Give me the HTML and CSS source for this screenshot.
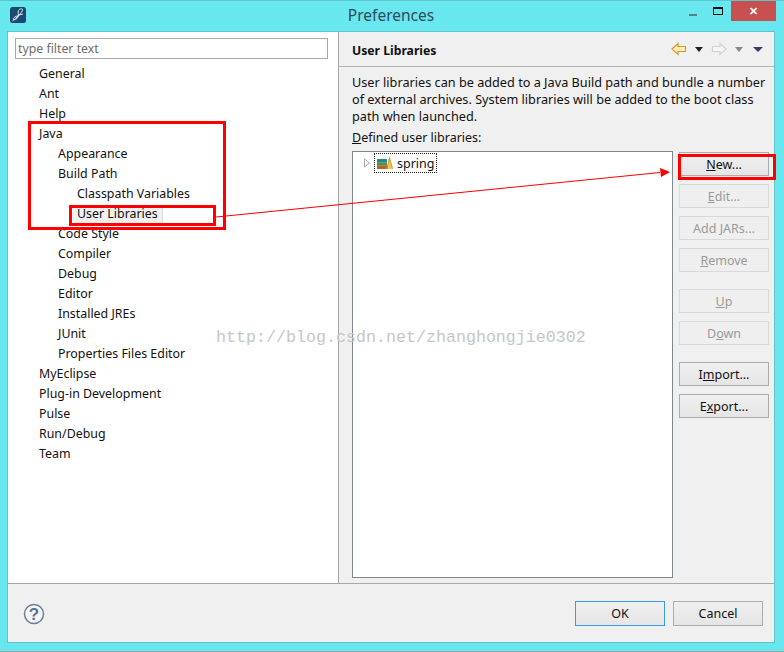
FILE: index.html
```html
<!DOCTYPE html>
<html lang="en">
<head>
<meta charset="utf-8">
<title>Preferences</title>
<link rel="stylesheet" href="styles.css">
</head>
<body>
<div class="window">
  <header class="titlebar">
    <svg class="app-icon" width="16" height="16" viewBox="0 0 16 16"><rect width="16" height="16" rx="2.5" fill="#1a4a74"/><path d="M2.500 14 C6 11.500 12 5.500 12.500 3 C12.800 1.200 9.500 1.300 8.500 3.500 C7.500 5.800 9 7.500 8 10 C7 12.500 3.500 13.500 3.200 12 C3 10.500 8 8 13 7" fill="none" stroke="#dfe9f0" stroke-width="1"/></svg>
    <h1 class="title">Preferences</h1>
    <div class="win-controls">
      <span class="win-min"></span>
      <span class="win-max"></span>
      <span class="win-close">✕</span>
    </div>
  </header>
  <div class="client">
    <div class="panes">
      <aside class="nav-pane">
        <input class="filter" type="text" placeholder="type filter text">
        <ul class="tree">
          <li class="l0">General</li>
          <li class="l0">Ant</li>
          <li class="l0">Help</li>
          <li class="l0">Java</li>
          <li class="l1">Appearance</li>
          <li class="l1">Build Path</li>
          <li class="l2">Classpath Variables</li>
          <li class="l2"><span class="selected">User Libraries</span></li>
          <li class="l1">Code Style</li>
          <li class="l1">Compiler</li>
          <li class="l1">Debug</li>
          <li class="l1">Editor</li>
          <li class="l1">Installed JREs</li>
          <li class="l1">JUnit</li>
          <li class="l1">Properties Files Editor</li>
          <li class="l0">MyEclipse</li>
          <li class="l0">Plug-in Development</li>
          <li class="l0">Pulse</li>
          <li class="l0">Run/Debug</li>
          <li class="l0">Team</li>
        </ul>
      </aside>
      <main class="page">
        <div class="page-head">
          <h2 class="page-title">User Libraries</h2>
          <div class="nav-tools">
            <svg width="16" height="14" viewBox="0 0 16 14"><path d="M1 7 L7 1.500 V4.500 H14.500 V9.500 H7 V12.500 Z" fill="#fdf0b8" stroke="#d9992a" stroke-width="1.200"/></svg>
            <span class="tri dark"></span>
            <svg width="16" height="14" viewBox="0 0 16 14"><path d="M15 7 L9 1.500 V4.500 H1.500 V9.500 H9 V12.500 Z" fill="#f6f6f6" stroke="#d0d0d0" stroke-width="1.200"/></svg>
            <span class="tri grey"></span>
            <span class="tri navy"></span>
          </div>
        </div>
        <div class="page-body">
          <p class="desc">User libraries can be added to a Java Build path and bundle a number of external archives. System libraries will be added to the boot class path when launched.</p>
          <label class="list-label"><u>D</u>efined user libraries:</label>
          <div class="list-row">
            <div class="list">
              <div class="lib-row">
                <svg class="twisty" width="8" height="10" viewBox="0 0 8 10"><path d="M1.500 1 L6.500 5 L1.500 9 Z" fill="#fff" stroke="#a5a5a5"/></svg>
                <span class="lib-focus">
                  <svg width="16" height="13" viewBox="0 0 16 13"><rect x="0" y="2" width="10" height="3.200" fill="#2f7f8c"/><rect x="0" y="5.200" width="10" height="3" fill="#3c9a57"/><rect x="0" y="8.200" width="11" height="3.800" fill="#b5642a"/><path d="M10 12 L12.500 0.500 L15.500 12" fill="#f2c94c" stroke="#c8952a"/></svg>
                  <span>spring</span>
                </span>
              </div>
            </div>
            <div class="btns">
              <button class="btn"><u>N</u>ew...</button>
              <button class="btn off"><u>E</u>dit...</button>
              <button class="btn off">Add <u>J</u>ARs...</button>
              <button class="btn off"><u>R</u>emove</button>
              <button class="btn off gap"><u>U</u>p</button>
              <button class="btn off">D<u>o</u>wn</button>
              <button class="btn gap">I<u>m</u>port...</button>
              <button class="btn">E<u>x</u>port...</button>
            </div>
          </div>
        </div>
      </main>
    </div>
    <footer class="footer">
      <svg width="22" height="22" viewBox="0 0 22 22"><circle cx="11" cy="11" r="9.500" fill="#f4f6f9" stroke="#6d7f9c" stroke-width="1.500"/><text x="11" y="17" text-anchor="middle" class="help-q">?</text></svg>
      <div class="footer-btns">
        <button class="btn wide default">OK</button>
        <button class="btn wide">Cancel</button>
      </div>
    </footer>
  </div>
  <div class="mark box-java"></div>
  <div class="mark box-lib"></div>
  <div class="mark box-new"></div>
  <svg class="arrow" width="784" height="652" viewBox="0 0 784 652"><path d="M216 217 L660 172.500" stroke="#f00" stroke-width="1" fill="none"/><path d="M660 168 L670 172 L661 177 Z" fill="#f00"/></svg>
  <div class="watermark">http://blog.csdn.net/zhanghongjie0302</div>
</div>
</body>
</html>
```
FILE: styles.css
```css
* { box-sizing: border-box; }
html, body { margin: 0; padding: 0; }
body { width: 784px; height: 652px; overflow: hidden; font-family: "Noto Sans", "Noto Sans CJK SC", sans-serif; font-size: 12.5px; color: #111; }
.window { position: relative; width: 784px; height: 652px; background: #69e7ee; padding: 0 9px 8px 7px; display: flex; flex-direction: column; border-top: 1px solid #5fc4cc; border-bottom: 1px solid #9aa8aa; }
.titlebar { height: 30px; flex: none; display: flex; align-items: center; position: relative; }
.app-icon { margin: -2px 0 0 3px; flex: none; }
.title { flex: 1; margin: 0; text-align: center; font-size: 15.500px; font-weight: 400; color: #2f4a5e; padding: 0 19px 2px 0; }
.win-controls { position: absolute; right: -1px; top: 0; display: flex; align-items: flex-start; }
.win-min { width: 8px; height: 2px; background: #5a8088; margin: 13px 16px 0 0; }
.win-max { width: 10px; height: 8px; border: 1px solid #111; border-top-width: 2px; margin: 6px 8px 0 0; }
.win-close { width: 45px; height: 20px; background: #c75050; color: #fff; text-align: center; line-height: 20px; font-size: 11px; font-weight: 700; }
.client { flex: 1; min-height: 0; display: flex; flex-direction: column; background: #f0f0f0; border: 1px solid #5fc4cc; }
.panes { flex: 1; min-height: 0; display: flex; border-bottom: 1px solid #a8a8a8; }
.nav-pane { width: 331px; flex: none; background: #fff; border-right: 1px solid #a8a8a8; padding: 6px 0 0 7px; }
.filter { display: block; width: 313px; height: 21px; border: 1px solid #a9a9a9; padding: 0 2px; font: inherit; font-size: 12.300px; background: #fff; outline: none; }
.filter::placeholder { color: #6d6d6d; opacity: 1; }
.tree { list-style: none; margin: 5px 0 0; padding: 0; font-size: 12.400px; }
.tree li { height: 20px; line-height: 20px; white-space: nowrap; }
.l0 { padding-left: 24px; }
.l1 { padding-left: 43px; }
.l2 { padding-left: 62px; }
.selected { display: inline-block; height: 19px; line-height: 18px; background: #f0f0f0; padding: 0 4px; margin-left: -4px; border-right: 1px solid #ddd; }
.page { flex: 1; min-width: 0; display: flex; flex-direction: column; }
.page-head { height: 35px; flex: none; display: flex; align-items: center; justify-content: space-between; border-bottom: 1px solid #b4b4b4; padding: 2px 11px 0 13px; }
.page-title { margin: 0; font-size: 12.200px; font-weight: 700; color: #111; }
.nav-tools { display: flex; align-items: center; gap: 8px; margin-top: -2px; }
.tri { width: 0; height: 0; border-left: 4px solid transparent; border-right: 4px solid transparent; border-top: 5px solid; }
.tri.dark { color: #222; }
.tri.grey { color: #888; }
.tri.navy { color: #3a3a6e; border-left-width: 5px; border-right-width: 5px; margin-left: 2px; }
.page-body { flex: 1; min-height: 0; display: flex; flex-direction: column; padding: 7px 6px 5px 13px; }
.desc { margin: 0; line-height: 17px; width: 425px; font-size: 12.700px; }
.list-label { display: block; margin-top: 4px; line-height: 18px; height: 19px; }
.list-row { flex: 1; min-height: 0; display: flex; gap: 6px; margin-top: 3px; }
.list { width: 321px; flex: none; background: #fff; border: 1px solid #82878f; padding: 2px 0 0 10px; }
.lib-row { display: flex; align-items: center; gap: 3px; height: 18px; }
.twisty { flex: none; }
.lib-focus { display: inline-flex; align-items: center; gap: 4px; height: 20px; padding: 0 2px; border: 1px dotted #222; }
.btns { width: 90px; flex: none; display: flex; flex-direction: column; gap: 8px; padding-top: 1px; }
.btn { display: block; width: 90px; height: 24px; padding: 0; font: inherit; color: #111; background: linear-gradient(#f0f0f0, #e5e5e5); border: 1px solid #acacac; border-radius: 0; text-align: center; }
.btn.off { color: #9a9a9a; background: #efefef; border-color: #d9d9d9; }
.btn.gap { margin-top: 9px; }
.footer { height: 58px; flex: none; display: flex; align-items: center; justify-content: space-between; padding: 1px 11px 0 15px; }
.footer-btns { display: flex; gap: 8px; }
.btn.wide { height: 25px; }
.btn.default { border-color: #3c9bf0; }
.help-q { font-size: 17px; font-weight: 700; fill: #5f7190; font-family: "Liberation Sans", sans-serif; }
.mark { position: absolute; border: 3px solid #f00; pointer-events: none; }
.box-java { left: 28px; top: 120px; width: 198px; height: 109px; }
.box-lib { left: 69px; top: 204px; width: 147px; height: 21px; }
.box-new { left: 678px; top: 153px; width: 98px; height: 26px; }
.arrow { position: absolute; left: 0; top: -1px; pointer-events: none; }
.watermark { position: absolute; left: 216px; top: 327px; font-family: "Liberation Mono", monospace; font-size: 16.670px; line-height: 20px; color: #c4c8c4; white-space: nowrap; }
```
